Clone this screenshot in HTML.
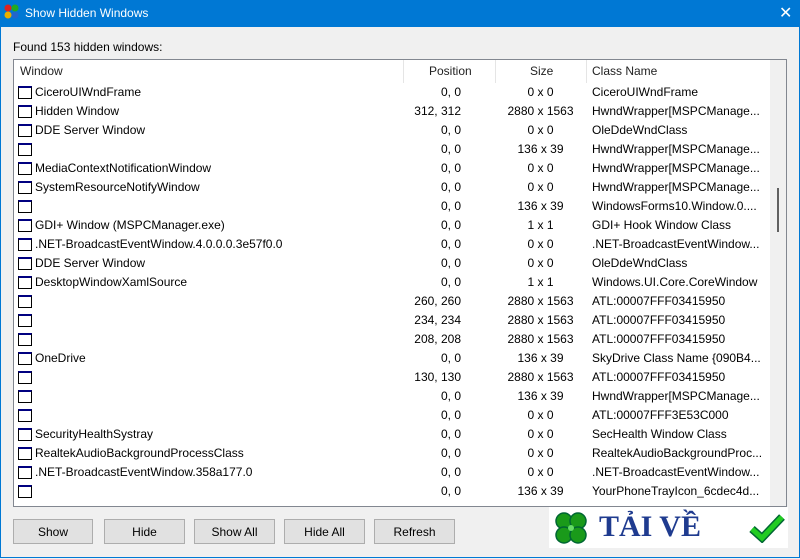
<!DOCTYPE html><html><head><style>
body{margin:0;width:800px;height:559px;overflow:hidden;font-family:"Liberation Sans",sans-serif;font-size:12px;background:#f0f0f0;position:relative}
.tb{position:absolute;left:0;top:0;width:800px;height:27px;background:#0078d4;color:#fff;font-size:12px}
.frame{position:absolute;left:0;top:27px;width:798px;height:530px;border:1px solid #0078d4;border-top:none}
.list{position:absolute;left:13px;top:59px;width:772px;height:446px;background:#fff;border:1px solid #828790;overflow:hidden}
.hd{position:absolute;top:0;height:23px;line-height:22px;color:#222}
.sep{position:absolute;top:0;width:1px;height:23px;background:#e5e5e5}
.row{position:absolute;left:0;height:19px;line-height:19px;width:756px;color:#000}
.row span{position:absolute;white-space:nowrap}
.ic{position:absolute;left:4px;top:3px;width:14px;height:13px;border:1px solid #000;border-top:2px solid #000080;box-sizing:border-box;background:#fff}
.btn{position:absolute;top:519px;height:25px;width:80px;border:1px solid #adadad;background:#e1e1e1;text-align:center;line-height:24px;box-sizing:border-box}
</style></head><body>
<div class="tb">
<svg style="position:absolute;left:3px;top:3px" width="18" height="18"><circle cx="5" cy="5" r="3.5" fill="#d22"/><circle cx="12" cy="5" r="3.5" fill="#2a2"/><circle cx="5" cy="12" r="3.5" fill="#e9b000"/><circle cx="12" cy="12" r="3.5" fill="#26c"/></svg>
<span style="position:absolute;left:25px;top:6px">Show Hidden Windows</span>
<span style="position:absolute;left:779px;top:3px;font-size:16px">✕</span>
</div>
<div class="frame"></div>
<div style="position:absolute;left:13px;top:40px">Found 153 hidden windows:</div>
<div class="list">
<div class="hd" style="left:6px">Window</div>
<div class="sep" style="left:389px"></div>
<div class="hd" style="left:415px">Position</div>
<div class="sep" style="left:481px"></div>
<div class="hd" style="left:516px">Size</div>
<div class="sep" style="left:572px"></div>
<div class="hd" style="left:578px">Class Name</div>
<div class="sep" style="left:756px"></div>
<div style="position:absolute;left:756px;top:0;width:16px;height:446px;background:#f0f0f0"></div>
<div style="position:absolute;left:763px;top:128px;width:2px;height:44px;background:#606060"></div>
<div id="rows"></div>
</div>
<div class="btn" style="left:13px">Show</div>
<div class="btn" style="left:104px;width:81px">Hide</div>
<div class="btn" style="left:194px;width:81px">Show All</div>
<div class="btn" style="left:284px;width:81px">Hide All</div>
<div class="btn" style="left:374px;width:81px">Refresh</div>
<div style="position:absolute;left:549px;top:507px;width:239px;height:41px;background:#fff">
<svg style="position:absolute;left:3px;top:2px" width="38" height="38"><g fill="#1a9a1a" stroke="#063" stroke-width="1.5"><circle cx="12" cy="12" r="8"/><circle cx="26" cy="12" r="8"/><circle cx="12" cy="26" r="8"/><circle cx="26" cy="26" r="8"/></g><circle cx="19" cy="19" r="3" fill="#6d6"/></svg>
<span style="position:absolute;left:50px;top:3px;font-family:'Liberation Serif',serif;font-weight:bold;font-size:30px;color:#1f3b8f">TẢI VỀ</span>
<svg style="position:absolute;left:200px;top:6px" width="36" height="30"><path d="M3 16 L13 25 L33 4" fill="none" stroke="#063" stroke-width="8"/><path d="M3 16 L13 25 L33 4" fill="none" stroke="#2c2" stroke-width="5"/></svg>
</div>
<script>
var d=[["CiceroUIWndFrame","0, 0","0 x 0","CiceroUIWndFrame"],["Hidden Window","312, 312","2880 x 1563","HwndWrapper[MSPCManage..."],["DDE Server Window","0, 0","0 x 0","OleDdeWndClass"],["","0, 0","136 x 39","HwndWrapper[MSPCManage..."],["MediaContextNotificationWindow","0, 0","0 x 0","HwndWrapper[MSPCManage..."],["SystemResourceNotifyWindow","0, 0","0 x 0","HwndWrapper[MSPCManage..."],["","0, 0","136 x 39","WindowsForms10.Window.0...."],["GDI+ Window (MSPCManager.exe)","0, 0","1 x 1","GDI+ Hook Window Class"],[".NET-BroadcastEventWindow.4.0.0.0.3e57f0.0","0, 0","0 x 0",".NET-BroadcastEventWindow..."],["DDE Server Window","0, 0","0 x 0","OleDdeWndClass"],["DesktopWindowXamlSource","0, 0","1 x 1","Windows.UI.Core.CoreWindow"],["","260, 260","2880 x 1563","ATL:00007FFF03415950"],["","234, 234","2880 x 1563","ATL:00007FFF03415950"],["","208, 208","2880 x 1563","ATL:00007FFF03415950"],["OneDrive","0, 0","136 x 39","SkyDrive Class Name {090B4..."],["","130, 130","2880 x 1563","ATL:00007FFF03415950"],["","0, 0","136 x 39","HwndWrapper[MSPCManage..."],["","0, 0","0 x 0","ATL:00007FFF3E53C000"],["SecurityHealthSystray","0, 0","0 x 0","SecHealth Window Class"],["RealtekAudioBackgroundProcessClass","0, 0","0 x 0","RealtekAudioBackgroundProc..."],[".NET-BroadcastEventWindow.358a177.0","0, 0","0 x 0",".NET-BroadcastEventWindow..."],["","0, 0","136 x 39","YourPhoneTrayIcon_6cdec4d..."]];
var h="";d.forEach(function(r,i){h+='<div class="row" style="top:'+(23+i*19)+'px"><div class="ic"></div><span style="left:21px">'+r[0]+'</span><span style="right:'+(756-447)+'px">'+r[1]+'</span><span style="left:481px;width:91px;text-align:center">'+r[2]+'</span><span style="left:578px">'+r[3]+'</span></div>'});
document.getElementById("rows").innerHTML=h;
</script>
</body></html>
